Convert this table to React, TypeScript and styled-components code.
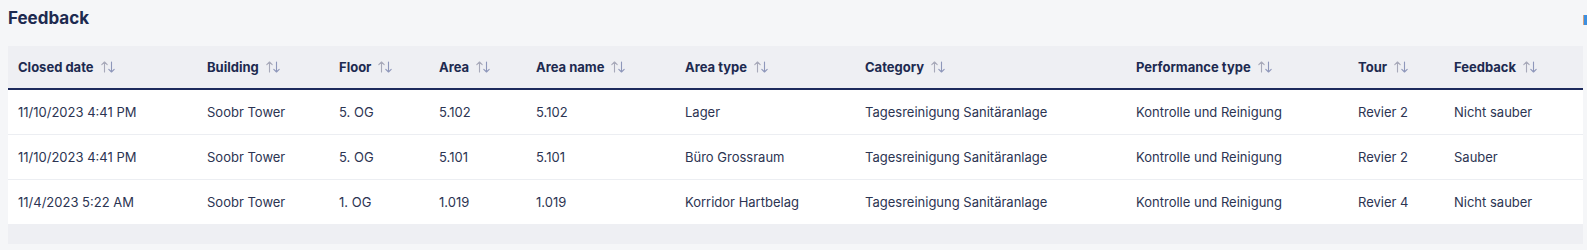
import styled, { createGlobalStyle } from "styled-components"

const GlobalStyle = createGlobalStyle`
  html, body {
    margin: 0;
    padding: 0;
    background: #f5f6f8;
    font-family: Inter, "Noto Sans", sans-serif;
    overflow: hidden;
  }
`

type Col = { key: string; label: string; width: number }

const COLUMNS: Col[] = [
  { key: "closed", label: "Closed date", width: 189 },
  { key: "building", label: "Building", width: 132 },
  { key: "floor", label: "Floor", width: 100 },
  { key: "area", label: "Area", width: 97 },
  { key: "areaName", label: "Area name", width: 149 },
  { key: "areaType", label: "Area type", width: 180 },
  { key: "category", label: "Category", width: 271 },
  { key: "performance", label: "Performance type", width: 222 },
  { key: "tour", label: "Tour", width: 96 },
  { key: "feedback", label: "Feedback", width: 139 },
]

const ROWS: Record<string, string>[] = [
  {
    closed: "11/10/2023 4:41 PM", building: "Soobr Tower", floor: "5. OG", area: "5.102", areaName: "5.102",
    areaType: "Lager", category: "Tagesreinigung Sanitäranlage", performance: "Kontrolle und Reinigung",
    tour: "Revier 2", feedback: "Nicht sauber",
  },
  {
    closed: "11/10/2023 4:41 PM", building: "Soobr Tower", floor: "5. OG", area: "5.101", areaName: "5.101",
    areaType: "Büro Grossraum", category: "Tagesreinigung Sanitäranlage", performance: "Kontrolle und Reinigung",
    tour: "Revier 2", feedback: "Sauber",
  },
  {
    closed: "11/4/2023 5:22 AM", building: "Soobr Tower", floor: "1. OG", area: "1.019", areaName: "1.019",
    areaType: "Korridor Hartbelag", category: "Tagesreinigung Sanitäranlage", performance: "Kontrolle und Reinigung",
    tour: "Revier 4", feedback: "Nicht sauber",
  },
]

const SortIcon = () => (
  <svg width="14" height="14" viewBox="0 0 14 14" fill="none">
    <path d="M3.5 12V2M0.8 4.7L3.5 2L6.2 4.7" stroke="#a7a9b9" strokeWidth="1.1" strokeLinecap="round" strokeLinejoin="round" />
    <path d="M10.5 2V12M7.8 9.3L10.5 12L13.2 9.3" stroke="#8e97ba" strokeWidth="1.1" strokeLinecap="round" strokeLinejoin="round" />
  </svg>
)

function App() {
  return (
    <Page>
      <GlobalStyle />
      <TopBar>
        <Title>Feedback</Title>
        <EdgeButton />
      </TopBar>
      <TableWrap>
        <Table>
          <colgroup>
            {COLUMNS.map(c => <col key={c.key} style={{ width: c.width }} />)}
          </colgroup>
          <thead>
            <tr>
              {COLUMNS.map(c => (
                <Th key={c.key}>
                  <HeadInner>
                    {c.label}
                    <SortIcon />
                  </HeadInner>
                </Th>
              ))}
            </tr>
          </thead>
          <tbody>
            {ROWS.map((r, i) => (
              <tr key={i}>
                {COLUMNS.map(c => <Td key={c.key}>{r[c.key]}</Td>)}
              </tr>
            ))}
          </tbody>
        </Table>
        <Footer />
      </TableWrap>
    </Page>
  )
}

const Page = styled.div`
  padding: 0 0 0 8px;
  width: 1587px;
  box-sizing: border-box;
`

const TopBar = styled.div`
  display: flex;
  align-items: flex-start;
  justify-content: space-between;
  height: 46px;
`

const Title = styled.h1`
  margin: 8px 0 0;
  font-size: 17px;
  line-height: 20px;
  font-weight: 700;
  color: #1d2a50;
`

const EdgeButton = styled.div`
  margin-top: 15px;
  width: 4px;
  height: 10px;
  background: linear-gradient(90deg, #d9a27c 0 1px, #3d8fe0 1px);
`

const TableWrap = styled.div`
  width: 1575px;
  background: #fdfdfd;
`

const Table = styled.table`
  width: 1575px;
  border-collapse: collapse;
  table-layout: fixed;
  background: #fff;
`

const Th = styled.th`
  height: 42px;
  padding: 0 10px;
  text-align: left;
  background: #eeeff3;
  border-bottom: 2px solid #1d2a5c;
  font-size: 13px;
  font-weight: 700;
  color: #1d2a50;
  white-space: nowrap;
`

const HeadInner = styled.div`
  display: flex;
  align-items: center;
  gap: 7px;
`

const Td = styled.td`
  height: 44px;
  padding: 0 10px;
  font-size: 13px;
  color: #2c3452;
  border-bottom: 1px solid #eceef2;
  white-space: nowrap;
  tr:last-child > & {
    border-bottom: none;
  }
`

const Footer = styled.div`
  height: 20px;
  background: #eeeff3;
`

export default App
